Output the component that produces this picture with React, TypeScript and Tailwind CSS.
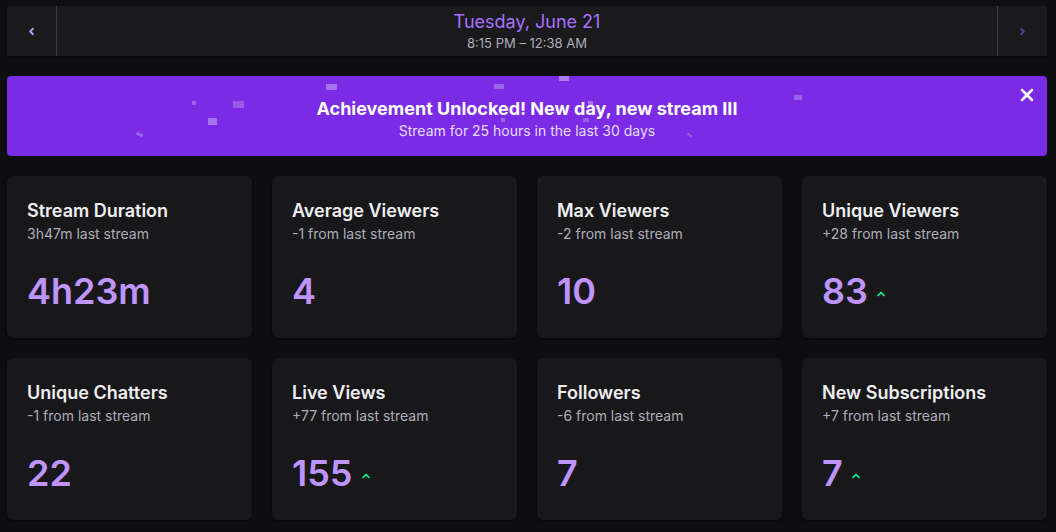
import { ChevronLeft, ChevronRight, X, ChevronUp } from 'lucide-react'

interface Stat {
  title: string
  sub: string
  value: string
  up?: boolean
}

const stats: Stat[] = [
  { title: 'Stream Duration', sub: '3h47m last stream', value: '4h23m' },
  { title: 'Average Viewers', sub: '-1 from last stream', value: '4' },
  { title: 'Max Viewers', sub: '-2 from last stream', value: '10' },
  { title: 'Unique Viewers', sub: '+28 from last stream', value: '83', up: true },
  { title: 'Unique Chatters', sub: '-1 from last stream', value: '22' },
  { title: 'Live Views', sub: '+77 from last stream', value: '155', up: true },
  { title: 'Followers', sub: '-6 from last stream', value: '7' },
  { title: 'New Subscriptions', sub: '+7 from last stream', value: '7', up: true },
]

// confetti bits floating over the banner (relative to banner box)
const confetti = [
  { x: 319, y: 8, w: 11, h: 6, o: 0.45, r: 0 },
  { x: 185, y: 25, w: 4, h: 4, o: 0.35, r: 0 },
  { x: 226, y: 25, w: 11, h: 7, o: 0.3, r: 0 },
  { x: 201, y: 42, w: 9, h: 7, o: 0.45, r: 0 },
  { x: 129, y: 57, w: 7, h: 3, o: 0.35, r: 25 },
  { x: 552, y: 0, w: 10, h: 5, o: 0.5, r: 0 },
  { x: 487, y: 8, w: 10, h: 5, o: 0.35, r: 0 },
  { x: 494, y: 42, w: 4, h: 4, o: 0.35, r: 0 },
  { x: 576, y: 42, w: 6, h: 4, o: 0.3, r: 0 },
  { x: 581, y: 25, w: 5, h: 5, o: 0.45, r: 0 },
  { x: 680, y: 58, w: 5, h: 2, o: 0.35, r: 40 },
  { x: 787, y: 19, w: 8, h: 5, o: 0.35, r: 0 },
]

function StatCard({ stat }: { stat: Stat }) {
  return (
    <div className="h-[162px] rounded-md bg-[#18181b] px-5 pt-[24px] shadow-[0_1px_2px_rgba(0,0,0,0.6)]">
      <h3 className="text-[18px] font-semibold leading-[22px] text-[#efeff1]">{stat.title}</h3>
      <p className="mt-[2px] text-[14px] leading-[20px] text-[#adadb8]">{stat.sub}</p>
      <div className="mt-[27px] flex items-end gap-[7px]">
        <span className="text-[36px] font-semibold leading-[40px] text-[#bf94ff]">{stat.value}</span>
        {stat.up && <ChevronUp size={12} strokeWidth={3.5} className="mb-[11px] text-[#00f593]" />}
      </div>
    </div>
  )
}

export default function App() {
  return (
    <div className="min-h-[532px] bg-[#0e0e10] pl-[7px] pr-[9px] pt-[6px] font-['Inter',sans-serif]">
      {/* Date navigator */}
      <div className="flex h-[50px] bg-[#1a1a1d] shadow-[0_1px_2px_rgba(0,0,0,0.7)]">
        <button className="flex w-[50px] items-center justify-center border-r border-[#3a3a3d] text-[#bf94ff]">
          <ChevronLeft size={11} strokeWidth={4} />
        </button>
        <div className="flex flex-1 flex-col items-center justify-center gap-[2px]">
          <span className="text-[18px] leading-[22px] text-[#a970ff]">Tuesday, June 21</span>
          <span className="text-[13px] leading-[16px] text-[#adadb8]">8:15 PM – 12:38 AM</span>
        </div>
        <button className="flex w-[50px] items-center justify-center border-l border-[#3a3a3d] text-[#5c3d8f]">
          <ChevronRight size={11} strokeWidth={4} />
        </button>
      </div>

      {/* Achievement banner */}
      <div className="relative mt-[20px] flex h-[80px] flex-col items-center justify-center overflow-hidden rounded-[4px] bg-[#7b2be6] pt-[5px]">
        {confetti.map((c, i) => (
          <span
            key={i}
            className="absolute bg-[#d8d0f0]"
            style={{ left: c.x, top: c.y, width: c.w, height: c.h, opacity: c.o, transform: `rotate(${c.r}deg)` }}
          />
        ))}
        <h2 className="relative text-[18px] font-bold leading-[24px] text-white">
          Achievement Unlocked! New day, new stream III
        </h2>
        <p className="relative text-[14px] leading-[20px] text-[#e6dcff]">Stream for 25 hours in the last 30 days</p>
        <button className="absolute right-[10px] top-[9px] text-white">
          <X size={20} strokeWidth={3} />
        </button>
      </div>

      {/* Stats */}
      <div className="mt-[20px] grid grid-cols-4 gap-5">
        {stats.map((s) => (
          <StatCard key={s.title} stat={s} />
        ))}
      </div>
    </div>
  )
}
